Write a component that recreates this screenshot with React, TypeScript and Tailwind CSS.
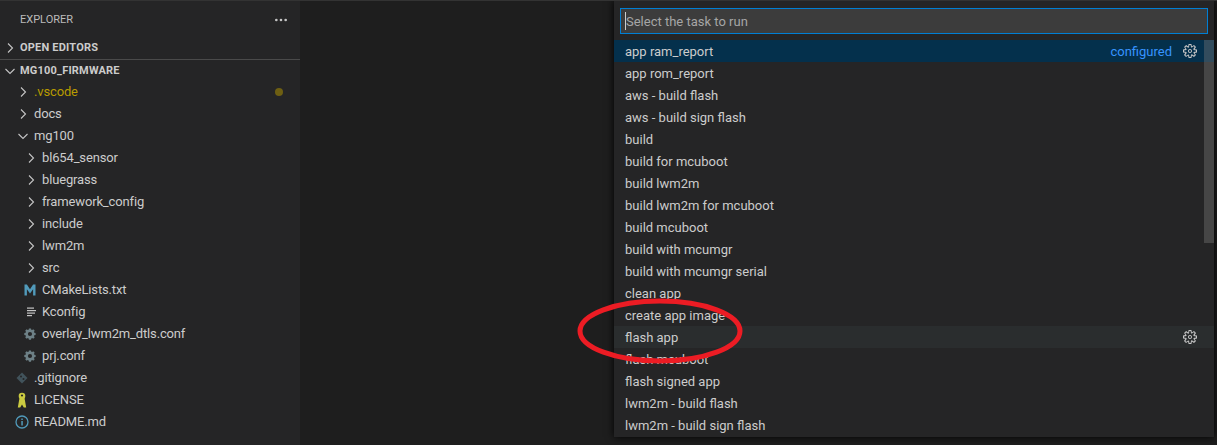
import React from "react";
import { MoreHorizontal } from "lucide-react";

const Chevron = ({ open }: { open?: boolean }) => (
  <svg width="16" height="16" viewBox="0 0 16 16" fill="none" stroke="#c5c5c5" strokeWidth="1.1" className="shrink-0">
    {open ? <path d="M3.5 6l4.5 4.5L12.5 6" /> : <path d="M6 3.5L10.5 8 6 12.5" />}
  </svg>
);

const Gear = ({ className = "" }: { className?: string }) => (
  <svg width="16" height="16" viewBox="0 0 16 16" className={`shrink-0 ${className}`}>
    <path
      fill="#c5c5c5"
      fillRule="evenodd"
      d="M9.1 4.4L8.6 2H7.4l-.5 2.4-.7.3-2-1.300-.9.8 1.300 2-.2.7-2.400.5v1.200l2.400.5.3.8-1.300 2 .8.8 2-1.300.8.3.4 2.300h1.200l.5-2.400.8-.3 2 1.300.8-.8-1.300-2 .3-.8 2.300-.4V7.400l-2.400-.5-.3-.8 1.300-2-.8-.8-2 1.300-.7-.2zM9.400 1l.5 2.400L12 2.100l2 2-1.400 2.100 2.400.4v2.800l-2.400.5L14 12l-2 2-2.100-1.400-.5 2.400H6.600l-.5-2.400L4 13.900l-2-2 1.400-2.100L1 9.400V6.600l2.400-.5L2.100 4l2-2 2.100 1.400.4-2.400h2.800zm.6 7c0 1.100-.9 2-2 2s-2-.9-2-2 .9-2 2-2 2 .9 2 2zM8 9c.6 0 1-.4 1-1s-.4-1-1-1-1 .4-1 1 .4 1 1 1z"
    />
  </svg>
);

const FileGear = () => (
  <svg width="16" height="16" viewBox="0 0 16 16" className="shrink-0">
    <path
      fill="#6d8086"
      fillRule="evenodd"
      d="M6.800 2.500h2.400l.3 1.500 1 .4 1.300-.9 1.700 1.700-.9 1.300.4 1 1.500.3v2.400l-1.500.3-.4 1 .9 1.300-1.700 1.700-1.300-.9-1 .4-.3 1.500H6.800l-.3-1.500-1-.4-1.300.9-1.700-1.700.9-1.300-.4-1-1.500-.3V7.800l1.500-.3.4-1-.9-1.300 1.700-1.700 1.300.9 1-.4z M8 6.600a2.400 2.400 0 1 0 0 4.800a2.400 2.400 0 0 0 0-4.800z"
      transform="translate(1 .2) scale(.87)"
    />
  </svg>
);

const CmakeIcon = () => (
  <svg width="16" height="16" viewBox="0 0 16 16" className="shrink-0">
    <path d="M2.500 13.500V2.500h2.400L8 7.300l3.100-4.800h2.400v11h-2.400V7.200L8 11.500 4.900 7.200v6.300z" fill="#519aba" />
  </svg>
);

const LinesIcon = () => (
  <svg width="16" height="16" viewBox="0 0 16 16" className="shrink-0">
    <g fill="#c5c5c5">
      <rect x="5" y="3.500" width="7" height="1.200" />
      <rect x="5" y="6" width="9" height="1.200" />
      <rect x="5" y="8.500" width="8" height="1.200" />
      <rect x="5" y="11" width="5" height="1.200" />
    </g>
  </svg>
);

const GitIcon = () => (
  <svg width="16" height="16" viewBox="0 0 16 16" className="shrink-0">
    <path d="M8 2.500L13.500 8 8 13.500 2.500 8z" fill="#41535b" />
    <circle cx="7" cy="6.500" r="1" fill="#252526" />
    <circle cx="9.500" cy="9" r="1" fill="#252526" />
  </svg>
);

const LicenseIcon = () => (
  <svg width="16" height="16" viewBox="0 0 16 16" className="shrink-0">
    <circle cx="8" cy="4" r="3.300" fill="#cbcb41" />
    <circle cx="8" cy="3.500" r="1.100" fill="#252526" />
    <path d="M5.500 6h5l1.700 9.500H9.800L8 12.500l-1.800 3H3.800z" fill="#cbcb41" />
  </svg>
);

const InfoIcon = () => (
  <svg width="16" height="16" viewBox="0 0 16 16" className="shrink-0" fill="none">
    <circle cx="8" cy="8" r="6" stroke="#519aba" strokeWidth="1.300" />
    <rect x="7.300" y="7" width="1.500" height="4.500" fill="#519aba" />
    <rect x="7.300" y="4.500" width="1.500" height="1.500" fill="#519aba" />
  </svg>
);

type Row = { label: string; pad: string; icon: React.ReactNode; color?: string; dot?: boolean; gap: string };

const tree: Row[] = [
  { label: ".vscode", pad: "pl-[15px]", gap: "ml-[3px]", icon: <Chevron />, color: "text-[#b89b00]", dot: true },
  { label: "docs", pad: "pl-[15px]", gap: "ml-[3px]", icon: <Chevron /> },
  { label: "mg100", pad: "pl-[15px]", gap: "ml-[3px]", icon: <Chevron open /> },
  { label: "bl654_sensor", pad: "pl-[23px]", gap: "ml-[3px]", icon: <Chevron /> },
  { label: "bluegrass", pad: "pl-[23px]", gap: "ml-[3px]", icon: <Chevron /> },
  { label: "framework_config", pad: "pl-[23px]", gap: "ml-[3px]", icon: <Chevron /> },
  { label: "include", pad: "pl-[23px]", gap: "ml-[3px]", icon: <Chevron /> },
  { label: "lwm2m", pad: "pl-[23px]", gap: "ml-[3px]", icon: <Chevron /> },
  { label: "src", pad: "pl-[23px]", gap: "ml-[3px]", icon: <Chevron /> },
  { label: "CMakeLists.txt", pad: "pl-[22px]", gap: "ml-[4px]", icon: <CmakeIcon /> },
  { label: "Kconfig", pad: "pl-[22px]", gap: "ml-[4px]", icon: <LinesIcon /> },
  { label: "overlay_lwm2m_dtls.conf", pad: "pl-[22px]", gap: "ml-[4px]", icon: <FileGear /> },
  { label: "prj.conf", pad: "pl-[22px]", gap: "ml-[4px]", icon: <FileGear /> },
  { label: ".gitignore", pad: "pl-[14px]", gap: "ml-[4px]", icon: <GitIcon /> },
  { label: "LICENSE", pad: "pl-[14px]", gap: "ml-[4px]", icon: <LicenseIcon /> },
  { label: "README.md", pad: "pl-[14px]", gap: "ml-[4px]", icon: <InfoIcon /> },
];

const tasks = [
  "app ram_report",
  "app rom_report",
  "aws - build flash",
  "aws - build sign flash",
  "build",
  "build for mcuboot",
  "build lwm2m",
  "build lwm2m for mcuboot",
  "build mcuboot",
  "build with mcumgr",
  "build with mcumgr serial",
  "clean app",
  "create app image",
  "flash app",
  "flash mcuboot",
  "flash signed app",
  "lwm2m - build flash",
  "lwm2m - build sign flash",
];

export default function App() {
  return (
    <div className="relative flex h-[445px] w-[1217px] overflow-hidden border-t border-[#333333] bg-[#1e1e1e] font-['Roboto','Open_Sans',sans-serif] text-[13px] text-[#cccccc]">
      <aside className="w-[300px] shrink-0 bg-[#252526] pt-px">
        <div className="flex h-[35px] items-center justify-between pl-5 pr-[11px]">
          <span className="pt-[2px] text-[11px] text-[#bbbbbb]">EXPLORER</span>
          <MoreHorizontal size={16} color="#c5c5c5" />
        </div>
        <div className="flex h-[22px] items-center pl-[2px] text-[11px] font-bold tracking-[0.2px]">
          <Chevron />
          <span className="ml-[2px]">OPEN EDITORS</span>
        </div>
        <div className="flex h-[22px] items-center border-t border-[#4a4a4a] pl-[2px] text-[11px] font-bold tracking-[0.2px]">
          <Chevron open />
          <span className="ml-[2px] pt-[2px]">MG100_FIRMWARE</span>
        </div>
        {tree.map((r) => (
          <div key={r.label} className={`flex h-[22px] items-center tracking-[-0.15px] ${r.pad} ${r.color ?? ""}`}>
            {r.icon}
            <span className={r.gap}>{r.label}</span>
            {r.dot && <span className="ml-auto mr-[17px] h-2 w-2 rounded-full bg-[#6e5f12]" />}
          </div>
        ))}
      </aside>
      <main className="flex-1" />
      <div className="absolute left-[614px] top-[-1px] w-[600px] bg-[#252526] shadow-[0_0_8px_#000000]">
        <div className="px-[6px] pb-[6px] pt-[8px]">
          <div className="flex h-[26px] items-center border border-[#007fd4] bg-[#3c3c3c] pl-[4px] text-[#a6a6a6]">
            <span className="h-[18px] w-px bg-[#cccccc]" />
            <span className="pt-px">Select the task to run</span>
          </div>
        </div>
        <div className="relative pb-px">
          {tasks.map((t, i) => (
            <div
              key={t}
              className={`flex h-[22px] items-center pl-[11px] pr-4 ${i === 0 ? "bg-[#04304c]" : i === 13 ? "bg-[#2a2d2e]" : ""}`}
            >
              <span className="pt-px">{t}</span>
              {i === 0 && <span className="ml-auto mr-[10px] pt-px text-[#3794ff]">configured</span>}
              {i === 0 && <Gear />}
              {i === 13 && <Gear className="ml-auto" />}
            </div>
          ))}
          <div className="absolute right-0 top-0 h-[203px] w-[10px] bg-[#79797966]" />
        </div>
      </div>
      <svg className="absolute left-[575px] top-[295px]" width="170" height="70" viewBox="0 0 170 70" fill="none">
        <ellipse cx="85" cy="35" rx="80" ry="30" stroke="#ec1c24" strokeWidth="5" />
      </svg>
    </div>
  );
}
